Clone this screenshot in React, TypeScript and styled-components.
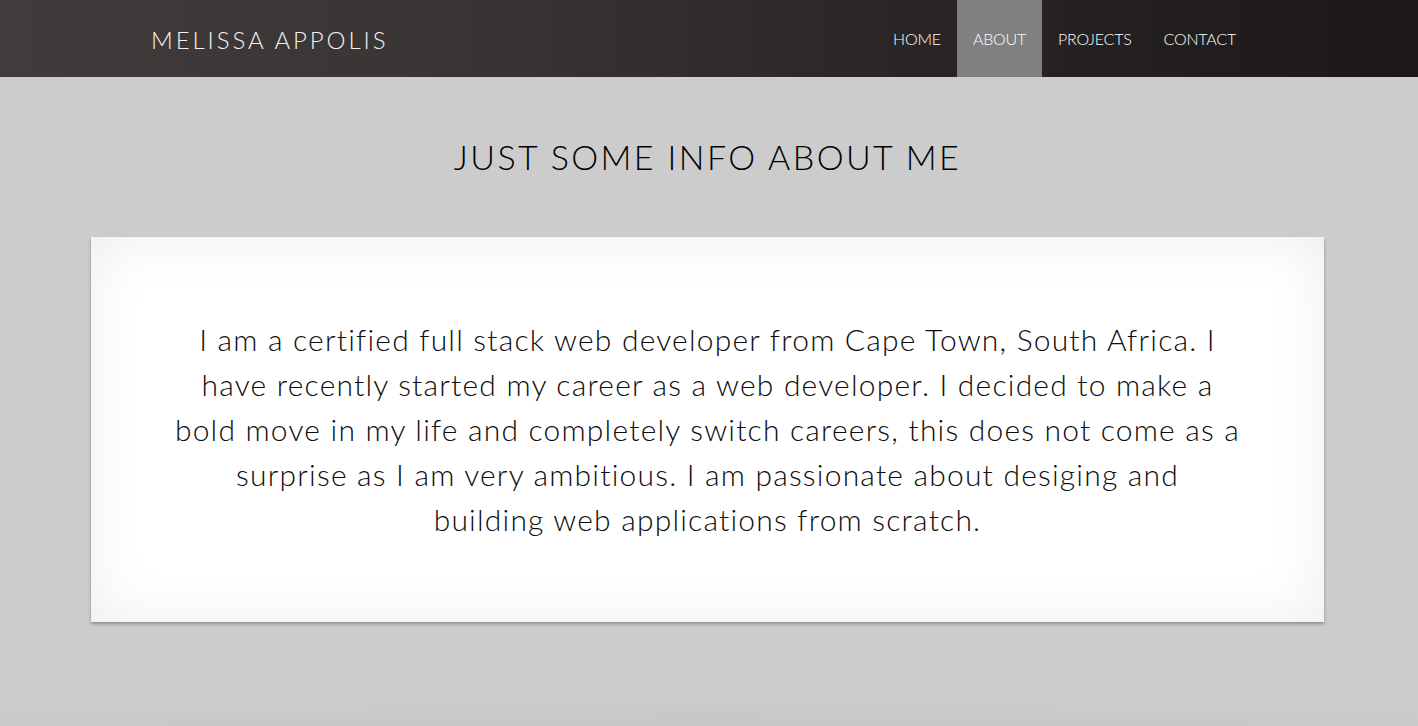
import React from 'react';
import styled, { createGlobalStyle } from 'styled-components';

const GlobalStyle = createGlobalStyle`
  html, body {
    margin: 0;
    padding: 0;
  }

  body {
    background: #cccccc;
    font-family: 'Lato', 'Liberation Sans', sans-serif;
    overflow: hidden;
  }
`;

const Page = styled.div`
  min-height: 726px;
  background:
    radial-gradient(ellipse 95% 60px at 50% 760px, rgba(0, 0, 0, 0.07), rgba(0, 0, 0, 0) 100%),
    #cccccc;
`;

const Header = styled.header`
  height: 77px;
  display: flex;
  align-items: stretch;
  justify-content: space-between;
  padding: 0 166px 0 151px;
  background: linear-gradient(90deg, #413c3c 0%, #393434 35%, #2a2525 65%, #1c1818 100%);
`;

const Brand = styled.a`
  display: flex;
  align-items: center;
  padding-top: 2px;
  font-size: 24px;
  font-weight: 300;
  letter-spacing: 2.9px;
  color: #f2f2f2;
  text-transform: uppercase;
  text-decoration: none;
`;

const Nav = styled.nav`
  display: flex;
  align-items: stretch;
`;

const NavItem = styled.a<{ $active?: boolean }>`
  display: flex;
  align-items: center;
  padding: 0 16px;
  font-size: 16px;
  font-weight: 300;
  letter-spacing: -0.2px;
  color: #ffffff;
  text-transform: uppercase;
  text-decoration: none;
  background: ${({ $active }) => ($active ? '#808080' : 'transparent')};
`;

const Section = styled.main`
  display: flex;
  flex-direction: column;
  align-items: center;
  padding: 60px 3px 0 0;
`;

const Title = styled.h1`
  margin: 0;
  font-size: 34px;
  font-weight: 300;
  letter-spacing: 2.4px;
  color: #000000;
  text-transform: uppercase;
  line-height: 40px;
`;

const Card = styled.div`
  box-sizing: border-box;
  width: 1233px;
  height: 385px;
  margin-top: 60px;
  padding: 80px 80px 0;
  background: #ffffff;
  box-shadow:
    inset 0 0 60px rgba(0, 0, 0, 0.07),
    0 2px 3px rgba(0, 0, 0, 0.3);
`;

const Text = styled.p`
  margin: 0;
  text-align: center;
  font-size: 30px;
  font-weight: 300;
  letter-spacing: 1.2px;
  line-height: 45px;
  color: #0d0d0d;
`;

const links = ['Home', 'About', 'Projects', 'Contact'];

const App: React.FC = () => (
  <>
    <GlobalStyle />
    <Page>
      <Header>
        <Brand href="#">Melissa Appolis</Brand>
        <Nav>
          {links.map((link) => (
            <NavItem
              key={link}
              href="#"
              $active={link === 'About'}
            >
              {link}
            </NavItem>
          ))}
        </Nav>
      </Header>
      <Section>
        <Title>Just some info about me</Title>
        <Card>
          <Text>
            I am a certified full stack web developer from Cape Town, South Africa. I have recently
            started my career as a web developer. I decided to make a bold move in my life and
            completely switch careers, this does not come as a surprise as I am very ambitious. I am
            passionate about desiging and
            <br />
            building web applications from scratch.
          </Text>
        </Card>
      </Section>
    </Page>
  </>
);

export default App;
